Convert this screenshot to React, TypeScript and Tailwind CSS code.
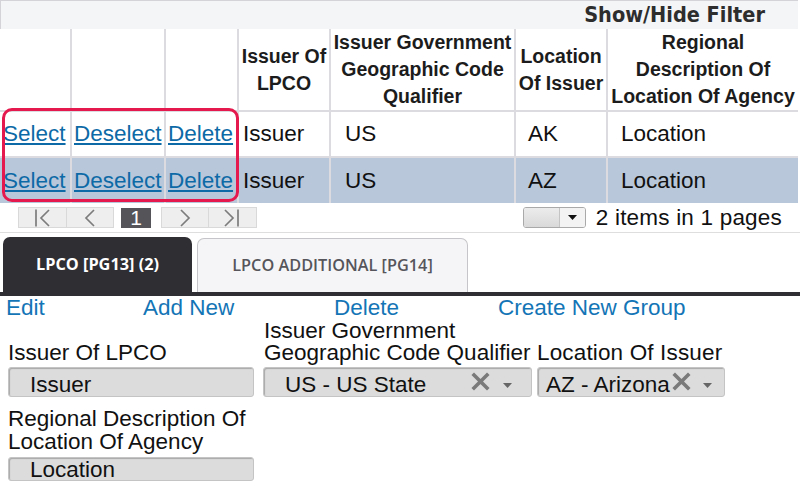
import React from "react";

const XIcon = () => (
  <svg width="19" height="19" viewBox="0 0 19 19" className="shrink-0">
    <path d="M3 3 L16 16 M16 3 L3 16" stroke="#7a7a7a" strokeWidth="3.6" strokeLinecap="square" />
  </svg>
);

const Caret = ({ color = "#666" }: { color?: string }) => (
  <svg width="9" height="5" viewBox="0 0 9 5" className="shrink-0">
    <path d="M0 0 L9 0 L4.5 5 Z" fill={color} />
  </svg>
);

const PagerIcon = ({ kind }: { kind: "first" | "prev" | "next" | "last" }) => {
  const d =
    kind === "first"
      ? "M2 0.5 L2 17.5 M15 1 L7 9 L15 17"
      : kind === "prev"
      ? "M10 1 L2 9 L10 17"
      : kind === "next"
      ? "M2 1 L10 9 L2 17"
      : "M1 1 L9 9 L1 17 M14 0.5 L14 17.5";
  const w = kind === "first" || kind === "last" ? 17 : 12;
  return (
    <svg width={w} height="18" viewBox={`0 0 ${w} 18`}>
      <path d={d} stroke="#7c7c7c" strokeWidth="1.7" fill="none" />
    </svg>
  );
};

const Link = ({ children }: { children: React.ReactNode }) => (
  <span className="text-[#0d6aa6] underline decoration-[1.5px] underline-offset-[2px]">{children}</span>
);

export default function App() {
  const rows = [
    { loc: "AK", bg: "bg-white" },
    { loc: "AZ", bg: "bg-[#b8c7da]" },
  ];
  return (
    <div className="w-[800px] h-[483px] overflow-hidden bg-white text-[#111] font-['Liberation_Sans',Arial,sans-serif]">
      {/* Grid section */}
      <div className="relative w-[798px]">
        <div className="h-[29px] bg-[#f4f5f7] border-t border-l border-[#d4d4d8] flex items-center justify-end pr-[33px]">
          <span className="font-['DejaVu_Sans',sans-serif] [font-stretch:condensed] font-bold text-[21.5px] leading-none text-[#2d2d2d]">
            Show/Hide Filter
          </span>
        </div>
        <table className="w-[798px] table-fixed border-collapse">
          <colgroup>
            <col className="w-[71px]" />
            <col className="w-[94px]" />
            <col className="w-[73px]" />
            <col className="w-[92px]" />
            <col className="w-[185px]" />
            <col className="w-[92px]" />
            <col className="w-[191px]" />
          </colgroup>
          <thead>
            <tr className="h-[81px] text-[19.5px] leading-[27px] font-bold text-[#1c1c1c]">
              <th className="border-r-[2px] border-[#dcdce0] p-0"></th>
              <th className="border-r-[2px] border-[#dcdce0] p-0"></th>
              <th className="border-r-[2px] border-[#dcdce0] p-0"></th>
              <th className="border-r-[2px] border-[#dcdce0] p-0 text-center align-middle font-bold">
                Issuer Of
                <br />
                LPCO
              </th>
              <th className="border-r-[2px] border-[#dcdce0] p-0 text-center align-middle font-bold whitespace-nowrap">
                Issuer Government
                <br />
                Geographic Code
                <br />
                Qualifier
              </th>
              <th className="border-r-[2px] border-[#dcdce0] p-0 text-center align-middle font-bold whitespace-nowrap">
                Location
                <br />
                Of Issuer
              </th>
              <th className="p-0 text-center align-middle font-bold whitespace-nowrap">
                Regional
                <br />
                Description Of
                <br />
                Location Of Agency
              </th>
            </tr>
          </thead>
          <tbody className="text-[22.5px] leading-[26px]">
            {rows.map((r) => (
              <tr key={r.loc} className={`h-[46px] border-t-[2px] border-[#dcdce0] ${r.bg}`}>
                <td className="border-r-[2px] border-[#dcdce0] pl-[3px] pr-0 align-middle whitespace-nowrap">
                  <Link>Select</Link>
                </td>
                <td className="border-r-[2px] border-[#dcdce0] pl-[2px] pr-0 align-middle whitespace-nowrap">
                  <Link>Deselect</Link>
                </td>
                <td className="border-r-[2px] border-[#dcdce0] pl-[2px] pr-0 align-middle whitespace-nowrap">
                  <Link>Delete</Link>
                </td>
                <td className="border-r-[2px] border-[#dcdce0] pl-[4px] align-middle">Issuer</td>
                <td className="border-r-[2px] border-[#dcdce0] pl-[14px] align-middle">US</td>
                <td className="border-r-[2px] border-[#dcdce0] pl-[12px] align-middle">{r.loc}</td>
                <td className="pl-[13px] align-middle">Location</td>
              </tr>
            ))}
          </tbody>
        </table>
        <div className="absolute left-[2px] top-[108px] w-[237px] h-[94px] border-[3px] border-[#e5194d] rounded-[10px] pointer-events-none"></div>
      </div>

      {/* Pager */}
      <div className="h-[30px] flex items-center border-b border-[#dedede]">
        <div className="flex items-center pl-[18px]">
          <div className="w-[49px] h-[21px] bg-[#eeeeee] border border-[#d9d9d9] flex items-center justify-center">
            <PagerIcon kind="first" />
          </div>
          <div className="w-[47px] h-[21px] bg-[#eeeeee] border border-l-0 border-[#d9d9d9] flex items-center justify-center">
            <PagerIcon kind="prev" />
          </div>
          <div className="ml-[7px] w-[30px] h-[20px] bg-[#555559] text-white text-[21px] leading-[20px] flex items-center justify-center">
            1
          </div>
          <div className="ml-[10px] w-[48px] h-[21px] bg-[#eeeeee] border border-[#d9d9d9] flex items-center justify-center">
            <PagerIcon kind="next" />
          </div>
          <div className="w-[48px] h-[21px] bg-[#eeeeee] border border-l-0 border-[#d9d9d9] flex items-center justify-center">
            <PagerIcon kind="last" />
          </div>
        </div>
        <div className="ml-auto flex items-center pr-[18px]">
          <div className="w-[63px] h-[21px] border border-[#a9a9a9] rounded-[3px] flex overflow-hidden">
            <div className="w-[36px] h-full bg-gradient-to-b from-[#ececec] to-[#d9d9d9] border-r border-[#c4c4c4]"></div>
            <div className="flex-1 h-full bg-[#f3f3f3] flex items-center justify-center">
              <Caret color="#111" />
            </div>
          </div>
          <span className="ml-[10px] text-[22.5px] leading-[26px] whitespace-nowrap tracking-[0.2px]">2 items in 1 pages</span>
        </div>
      </div>

      {/* Tabs */}
      <div className="flex items-end pt-[4px] h-[59px] font-['Open_Sans',sans-serif]">
        <div className="ml-[3px] w-[189px] h-[55px] bg-[#2e2e33] rounded-t-[7px] flex items-center justify-center text-white font-bold text-[16.3px] whitespace-nowrap">
          LPCO [PG13] (2)
        </div>
        <div className="ml-[5px] w-[271px] h-[54px] bg-[#f5f5f7] border-[1.5px] border-b-0 border-[#c6c6ca] rounded-t-[7px] flex items-center justify-center text-[#55555b] font-semibold text-[16.3px] whitespace-nowrap">
          LPCO ADDITIONAL [PG14]
        </div>
      </div>
      <div className="h-[4px] bg-[#2e2e33]"></div>

      {/* Actions */}
      <div className="flex items-center h-[24px] text-[22.5px] leading-[24px] text-[#1475b6] whitespace-nowrap">
        <span className="pl-[6px] w-[143px]">Edit</span>
        <span className="w-[191px]">Add New</span>
        <span className="w-[164px]">Delete</span>
        <span>Create New Group</span>
      </div>

      {/* Form */}
      <div className="pl-[8px] text-[22.5px] leading-[22px] text-[#111]">
        <div className="flex items-end">
          <div className="w-[255px] flex flex-col">
            <div className="whitespace-nowrap">Issuer Of LPCO</div>
            <div className="mt-[3px] w-[246px] h-[30px] bg-[#dcdcdc] border border-[#c4c4c4] rounded-[3px] shadow-[inset_1px_1px_1px_#a8a8a8] pl-[21px] pt-[6px] whitespace-nowrap">
              Issuer
            </div>
          </div>
          <div className="w-[274px] flex flex-col">
            <div className="whitespace-nowrap pl-[1px]">
              Issuer Government
              <br />
              Geographic Code Qualifier
            </div>
            <div className="mt-[3px] w-[269px] h-[30px] bg-[#dcdcdc] border border-[#c4c4c4] rounded-[3px] shadow-[inset_1px_1px_1px_#a8a8a8] pl-[21px] pr-[19px] pt-[6px] flex items-start whitespace-nowrap">
              <span>US - US State</span>
              <span className="ml-auto mt-[-2px]">
                <XIcon />
              </span>
              <span className="ml-[13px] mt-[9px]">
                <Caret />
              </span>
            </div>
          </div>
          <div className="w-[190px] flex flex-col">
            <div className="whitespace-nowrap tracking-[0.15px]">Location Of Issuer</div>
            <div className="mt-[3px] w-[188px] h-[30px] bg-[#dcdcdc] border border-[#c4c4c4] rounded-[3px] shadow-[inset_1px_1px_1px_#a8a8a8] pl-[8px] pr-[12px] pt-[6px] flex items-start whitespace-nowrap">
              <span>AZ - Arizona</span>
              <span className="ml-auto mt-[-2px]">
                <XIcon />
              </span>
              <span className="ml-[12px] mt-[9px]">
                <Caret />
              </span>
            </div>
          </div>
        </div>
        <div className="mt-[10px] w-[255px] flex flex-col">
          <div className="whitespace-nowrap leading-[23px]">
            Regional Description Of
            <br />
            Location Of Agency
          </div>
          <div className="mt-[4px] w-[246px] h-[24px] bg-[#dcdcdc] border border-[#c4c4c4] rounded-[3px] shadow-[inset_1px_1px_1px_#a8a8a8] pl-[21px] pt-[1px] whitespace-nowrap">
            Location
          </div>
        </div>
      </div>
    </div>
  );
}
